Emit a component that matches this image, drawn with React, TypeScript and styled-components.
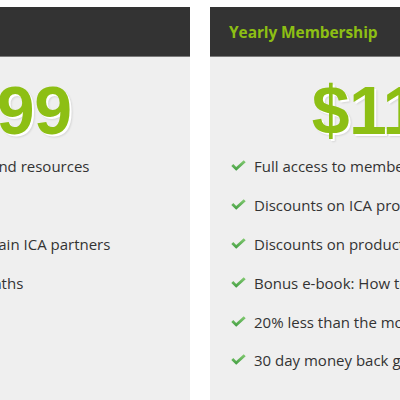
import React from "react";
import styled, { createGlobalStyle } from "styled-components";

const Global = createGlobalStyle`
  html, body { margin: 0; padding: 0; background: #ffffff; overflow: hidden; }
  body { font-family: "Open Sans", "Liberation Sans", sans-serif; }
`;

const Row = styled.div`
  display: flex;
  gap: 20px;
  margin-left: -252px;
  padding-top: 7px;
`;

const Card = styled.section`
  flex: 0 0 442px;
  width: 442px;
  min-height: 430px;
  background: #efefef;
  display: flex;
  flex-direction: column;
`;

const Header = styled.header`
  height: 49px;
  background: #333333;
  border-bottom: 1px solid #7a7a7a;
  display: flex;
  align-items: center;
  padding-left: 19px;
`;

const Title = styled.h2`
  margin: 0;
  font-family: "Open Sans", "Liberation Sans", sans-serif;
  font-weight: 700;
  font-size: 15.5px;
  color: #8dbf14;
  letter-spacing: -0.1px;
`;

const Price = styled.div`
  margin-top: 19px;
  text-align: center;
  font-family: "Liberation Sans", Arial, sans-serif;
  font-weight: 700;
  font-size: 68px;
  line-height: 68px;
  color: #8dbf14;
  letter-spacing: -0.5px;
  text-shadow: 2px 2px 0 #ffffff, 3px 3px 2px rgba(0, 0, 0, 0.1);
`;

const List = styled.ul`
  list-style: none;
  margin: 3px 0 0;
  padding: 0 0 0 21px;
`;

const Item = styled.li`
  display: flex;
  align-items: center;
  height: 38.8px;
  font-size: 15px;
  color: #333333;
  white-space: nowrap;
`;

const CheckBox = styled.span`
  display: inline-flex;
  width: 15px;
  margin-right: 8px;
  margin-top: -1px;
`;

const Check: React.FC = () => (
  <CheckBox>
    <svg width="15" height="11" viewBox="0 0 15 11">
      <defs>
        <linearGradient id="ck" x1="0" y1="0" x2="0" y2="1">
          <stop offset="0" stopColor="#86cc74" />
          <stop offset="1" stopColor="#3f9c3f" />
        </linearGradient>
      </defs>
      <path d="M0.3 6.1 L2.3 4.1 L5.2 6.9 L12.7 0.2 L14.7 2.2 L5.2 10.8 Z" fill="url(#ck)" />
    </svg>
  </CheckBox>
);

type Plan = { title: string; price: string; items: string[] };

const plans: Plan[] = [
  {
    title: "Monthly Membership",
    price: "$12.99",
    items: [
      "Full access to member tools and resources",
      "Discounts on ICA products",
      "Discounts on products of certain ICA partners",
      "Minimum commitment 3 months",
    ],
  },
  {
    title: "Yearly Membership",
    price: "$119.88",
    items: [
      "Full access to member tools and resources",
      "Discounts on ICA products",
      "Discounts on products from certain ICA partners",
      "Bonus e-book: How to get started",
      "20% less than the monthly rate",
      "30 day money back guarantee",
    ],
  },
];

export default function App() {
  return (
    <>
      <Global />
      <Row>
        {plans.map((p) => (
          <Card key={p.title}>
            <Header>
              <Title>{p.title}</Title>
            </Header>
            <Price>{p.price}</Price>
            <List>
              {p.items.map((it) => (
                <Item key={it}>
                  <Check />
                  {it}
                </Item>
              ))}
            </List>
          </Card>
        ))}
      </Row>
    </>
  );
}
